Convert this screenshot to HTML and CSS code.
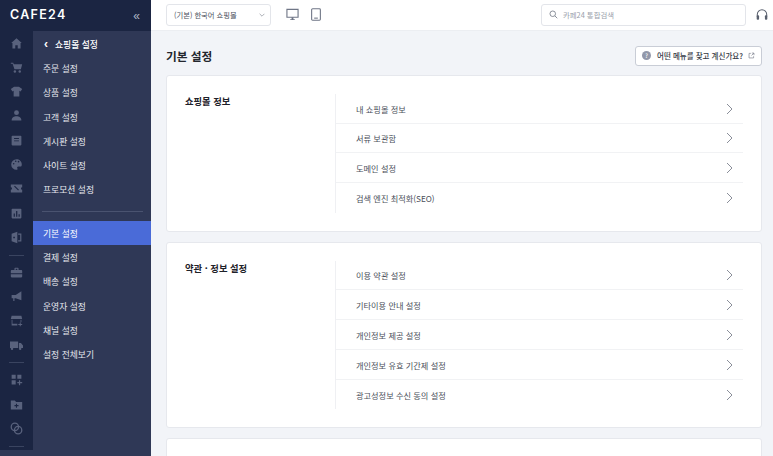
FILE: index.html
```html
<!DOCTYPE html>
<html lang="ko">
<head>
<meta charset="utf-8">
<title>기본 설정</title>
<link rel="stylesheet" href="styles.css">
</head>
<body>
<div class="app">
  <aside class="sidebar">
    <div class="brand">
      <span class="logo">cafe24</span>
      <span class="collapse">«</span>
    </div>
    <div class="side-body">
      <nav class="rail">
        <svg class="ri" viewBox="0 0 16 16"><path d="M8 1.500 1.500 7.500H3V14h3.500v-4h3v4H13V7.500h1.500z"/></svg>
        <svg class="ri" viewBox="0 0 16 16"><path d="M1 2h3l.6 2H15l-1.600 6H5.500L3.200 3.500H1z"/><circle cx="6" cy="13" r="1.500"/><circle cx="12" cy="13" r="1.500"/></svg>
        <svg class="ri" viewBox="0 0 16 16"><path d="M5 2h6l4 3-2 3-1.500-.8V14H4.500V7.200L3 8 1 5z"/></svg>
        <svg class="ri" viewBox="0 0 16 16"><circle cx="8" cy="4.500" r="3"/><path d="M2 14c0-3.500 3-5 6-5s6 1.500 6 5z"/></svg>
        <svg class="ri" viewBox="0 0 16 16"><path fill-rule="evenodd" d="M3 2h10a1 1 0 0 1 1 1v10a1 1 0 0 1-1 1H3a1 1 0 0 1-1-1V3a1 1 0 0 1 1-1zm2 3v1h6V5zm0 3v1h6V8z"/></svg>
        <svg class="ri" viewBox="0 0 16 16"><path fill-rule="evenodd" d="M8 1.500a6.500 6.500 0 1 0 0 13c1.500 0 1.500-1 1-2s0-2 1.500-2H13c1 0 1.500-1 1.500-2.500C14.500 4 11.500 1.500 8 1.500zM4.500 8a1 1 0 1 1 0-2 1 1 0 0 1 0 2zM7 5a1 1 0 1 1 0-2 1 1 0 0 1 0 2zm3.500.500a1 1 0 1 1 0-2 1 1 0 0 1 0 2z"/></svg>
        <svg class="ri" viewBox="0 0 16 16"><path fill-rule="evenodd" d="M1 3h14v3.500a1.500 1.500 0 0 0 0 3V13H1V9.500a1.500 1.500 0 0 0 0-3zm4 2.500 5 5 1-1-5-5z"/></svg>
        <svg class="ri" viewBox="0 0 16 16"><path fill-rule="evenodd" d="M3 2h10a1 1 0 0 1 1 1v10a1 1 0 0 1-1 1H3a1 1 0 0 1-1-1V3a1 1 0 0 1 1-1zm1.500 6v4h1.500V8zm3-3v7H9V5zm3 4v3H12V9z"/></svg>
        <svg class="ri" viewBox="0 0 16 16"><path fill-rule="evenodd" d="M2 3.500 9 1v14l-7-2.500zM10 3h4v10h-4v-1.500h2.500v-7H10zM4 7v2h2V7z"/></svg>
        <div class="rail-sep"></div>
        <svg class="ri" viewBox="0 0 16 16"><path fill-rule="evenodd" d="M5.500 5V3a1 1 0 0 1 1-1h3a1 1 0 0 1 1 1v2H14a1 1 0 0 1 1 1v7a1 1 0 0 1-1 1H2a1 1 0 0 1-1-1V6a1 1 0 0 1 1-1zM7 3.500V5h2V3.500zM1 9h14v1H1z"/></svg>
        <svg class="ri" viewBox="0 0 16 16"><path d="M14 1.500v11L7 10H5.500v3.500H4V10H2V6h5z"/></svg>
        <svg class="ri" viewBox="0 0 16 16"><path fill-rule="evenodd" d="M2 2h12l1 4H1zm0 5h1v5h6v2H2zm11 0h1v3h-1zm-1 3.500h1.200v1.800H15v1.200h-1.800V15H12v-1.500h-1.800v-1.200H12z"/></svg>
        <svg class="ri" viewBox="0 0 16 16"><path d="M0 3h10v8H0zm11 2h2.500L16 8v3h-5zM4 12a1.500 1.500 0 1 1-3 0 1.500 1.500 0 0 1 3 0zm10 0a1.500 1.500 0 1 1-3 0 1.500 1.500 0 0 1 3 0z"/></svg>
        <div class="rail-sep"></div>
        <svg class="ri" viewBox="0 0 16 16"><path d="M2 2h5v5H2zm7 0h5v5H9zM2 9h5v5H2zm9 0h1.500v2H15v1.500h-2.500V15H11v-2.500H9V11h2z"/></svg>
        <svg class="ri" viewBox="0 0 16 16"><path fill-rule="evenodd" d="M1 3h5l1.500 2H15v9H1zm6.300 4v1.700H5.500v1.300h1.800V12h1.300v-2h1.900V8.700H8.600V7z"/></svg>
        <svg class="ri ri-line" viewBox="0 0 16 16"><circle cx="6" cy="6" r="4.500"/><circle cx="10" cy="10" r="4.500"/></svg>
        <div class="rail-sep"></div>
      </nav>
      <nav class="menu">
        <a class="mi mi-back"><span class="back">‹</span>쇼핑몰 설정</a>
        <a class="mi">주문 설정</a>
        <a class="mi">상품 설정</a>
        <a class="mi">고객 설정</a>
        <a class="mi">게시판 설정</a>
        <a class="mi">사이트 설정</a>
        <a class="mi">프로모션 설정</a>
        <div class="menu-sep"></div>
        <a class="mi active">기본 설정</a>
        <a class="mi">결제 설정</a>
        <a class="mi">배송 설정</a>
        <a class="mi">운영자 설정</a>
        <a class="mi">채널 설정</a>
        <a class="mi">설정 전체보기</a>
      </nav>
    </div>
  </aside>
  <div class="main">
    <header class="topbar">
      <div class="select"><span>(기본) 한국어 쇼핑몰</span>
        <svg class="chev" viewBox="0 0 10 6"><path d="M1 1l4 4 4-4"/></svg>
      </div>
      <svg class="dev dev-pc" viewBox="0 0 14 13"><path d="M1 1h12v8.500H1z"/><path class="solid" d="M4.500 11.500h5v1h-5zM6 9.500h2v2H6z"/></svg>
      <svg class="dev dev-tab" viewBox="0 0 11 14"><rect x="0.700" y="0.700" width="9.600" height="12.600" rx="1"/><path d="M3.500 11h4"/></svg>
      <div class="search">
        <svg class="mag" viewBox="0 0 12 12"><circle cx="5" cy="5" r="3.700"/><path d="M7.800 7.800 11 11"/></svg>
        <span>카페24 통합검색</span>
      </div>
      <svg class="head" viewBox="0 0 14 14"><path d="M1.500 9V7a5.500 5.500 0 0 1 11 0v2"/><rect class="solid" x="0.800" y="8" width="2.800" height="5" rx="1"/><rect class="solid" x="10.400" y="8" width="2.800" height="5" rx="1"/></svg>
    </header>
    <main class="content">
      <div class="page-head">
        <h1>기본 설정</h1>
        <a class="help"><span class="q">?</span>어떤 메뉴를 찾고 계신가요?
          <svg class="ext" viewBox="0 0 10 10"><path d="M4 2H1.500v6.500H8V6M5.500 1.500h3v3M8.500 1.500 5 5"/></svg>
        </a>
      </div>
      <section class="card">
        <h2>쇼핑몰 정보</h2>
        <ul class="rows">
          <li>내 쇼핑몰 정보<svg class="arr" viewBox="0 0 7 12"><path d="M1 1l5 5-5 5"/></svg></li>
          <li>서류 보관함<svg class="arr" viewBox="0 0 7 12"><path d="M1 1l5 5-5 5"/></svg></li>
          <li>도메인 설정<svg class="arr" viewBox="0 0 7 12"><path d="M1 1l5 5-5 5"/></svg></li>
          <li>검색 엔진 최적화(SEO)<svg class="arr" viewBox="0 0 7 12"><path d="M1 1l5 5-5 5"/></svg></li>
        </ul>
      </section>
      <section class="card">
        <h2>약관 · 정보 설정</h2>
        <ul class="rows">
          <li>이용 약관 설정<svg class="arr" viewBox="0 0 7 12"><path d="M1 1l5 5-5 5"/></svg></li>
          <li>기타이용 안내 설정<svg class="arr" viewBox="0 0 7 12"><path d="M1 1l5 5-5 5"/></svg></li>
          <li>개인정보 제공 설정<svg class="arr" viewBox="0 0 7 12"><path d="M1 1l5 5-5 5"/></svg></li>
          <li>개인정보 유효 기간제 설정<svg class="arr" viewBox="0 0 7 12"><path d="M1 1l5 5-5 5"/></svg></li>
          <li>광고성정보 수신 동의 설정<svg class="arr" viewBox="0 0 7 12"><path d="M1 1l5 5-5 5"/></svg></li>
        </ul>
      </section>
      <section class="card card-empty"></section>
    </main>
  </div>
</div>
</body>
</html>
```

FILE: styles.css
```css
* { box-sizing: border-box; }
html, body { margin: 0; height: 100%; overflow: hidden; }
body {
  font-family: "Noto Sans CJK KR", "Noto Sans", sans-serif;
  background: #f2f4f8;
  color: #2a2f3a;
}
.app { display: flex; width: 773px; height: 456px; overflow: hidden; }

/* Sidebar */
.sidebar { width: 151px; flex: none; display: flex; flex-direction: column; background: #2f3856; }
.brand {
  height: 31px; flex: none; background: #1b2542;
  display: flex; align-items: center; justify-content: space-between;
  padding: 0 11px 0 10px;
}
.logo {
  font-family: "Inter", "Liberation Sans", sans-serif;
  font-size: 12.500px; font-weight: 600; color: #fff; letter-spacing: 1.300px;
  line-height: 1; text-transform: uppercase;
}
.collapse { color: #aeb4c6; font-size: 12px; line-height: 1; font-family: "Liberation Sans", sans-serif; }
.side-body { display: flex; flex: 1; }
.rail {
  width: 33px; height: 419px; flex: none; background: #1b2542;
  display: flex; flex-direction: column; align-items: center;
}
.ri { width: 13px; height: 13px; margin: 5.650px 0; fill: #59627d; flex: none; }
.ri-line { fill: none; stroke: #59627d; stroke-width: 1.600; }
.rail-sep { width: 15px; height: 1px; margin: 5px 0 4.500px; background: #3a4460; flex: none; }

.menu { flex: 1; display: flex; flex-direction: column; padding-top: 1px; }
.mi {
  height: 24.300px; flex: none; display: flex; align-items: center;
  padding-left: 10px; font-size: 8.800px; color: #e6e8ef; white-space: nowrap;
}
.mi-back { font-weight: 500; color: #fff; }
.back { width: 9px; margin-left: 1px; margin-right: 2px; font-size: 12px; line-height: 1; font-family: "Liberation Sans", sans-serif; font-weight: 700; }
.mi.active { background: #4a6bd8; color: #fff; }
.menu-sep { height: 1px; background: #4a5370; margin: 9px 8px 9px 9px; flex: none; }

/* Main */
.main { flex: 1; min-width: 0; display: flex; flex-direction: column; }
.topbar {
  height: 31px; flex: none; background: #fff; border-bottom: 1px solid #eceef2;
  display: flex; align-items: center; padding: 0 5px 1px 15px;
}
.select {
  width: 105px; height: 22px; border: 1px solid #e3e5ea; border-radius: 3px;
  display: flex; align-items: center; justify-content: space-between;
  padding: 0 5px 0 7px; font-size: 7.300px; color: #4a4f5c;
}
.chev { width: 6px; height: 4px; fill: none; stroke: #777c88; stroke-width: 1; }
.dev { fill: none; stroke: #6f7686; stroke-width: 1.200; height: 13px; }
.dev-pc { width: 13px; margin-left: 15px; }
.dev-pc .solid { fill: #6f7686; stroke: none; }
.dev-tab { width: 10px; margin-left: 12px; }
.search {
  width: 205px; height: 22px; margin-left: auto; border: 1px solid #e3e5ea; border-radius: 3px;
  display: flex; align-items: center; gap: 5px; padding: 0 7px;
  font-size: 7.400px; color: #9a9fab;
}
.mag { width: 9px; height: 9px; fill: none; stroke: #7f8490; stroke-width: 1.200; }
.head { width: 12px; height: 13px; margin-left: 10px; fill: none; stroke: #59606e; stroke-width: 1.200; flex: none; }
.head .solid { fill: #59606e; stroke: none; }

.content { flex: 1; padding: 0 11px 0 15px; overflow: hidden; }
.page-head { height: 44px; display: flex; align-items: center; justify-content: space-between; padding-top: 5px; }
h1 { margin: 0; font-size: 11.700px; font-weight: 700; color: #23262e; }
.help {
  width: 127px; height: 20px; background: #fff; border: 1px solid #c9cdd6; border-radius: 3px;
  display: flex; align-items: center; padding: 0 6px; font-size: 7.500px; font-weight: 500; color: #353945;
  white-space: nowrap;
}
.q {
  width: 9px; height: 9px; border-radius: 50%; background: #9298aa; color: #fff;
  display: flex; align-items: center; justify-content: center; font-size: 6px; margin-right: 6px; flex: none;
}
.ext { width: 7px; height: 7px; margin-left: auto; fill: none; stroke: #7f8490; stroke-width: 1; flex: none; }

.card {
  display: flex; background: #fff; border: 1px solid #e6e8ed; border-radius: 3px;
  padding: 18px 18px 18px 18px; margin-bottom: 10px;
}
h2 { width: 150px; flex: none; margin: 0; font-size: 9.300px; font-weight: 700; color: #1e2129; line-height: 14px; }
.rows { flex: 1; margin: 0; padding: 0; list-style: none; border-left: 1px solid #eff0f3; }
.rows li {
  height: 29.700px; display: flex; align-items: center; justify-content: space-between;
  padding: 0.800px 10px 0 20px; font-size: 8.200px; color: #4a4f5a;
  border-bottom: 1px solid #f1f2f4;
}
.rows li:last-child { border-bottom: 0; }
.arr { width: 7px; height: 12px; fill: none; stroke: #8a8e99; stroke-width: 1; }
.card-empty { height: 60px; margin-bottom: 0; }
```
